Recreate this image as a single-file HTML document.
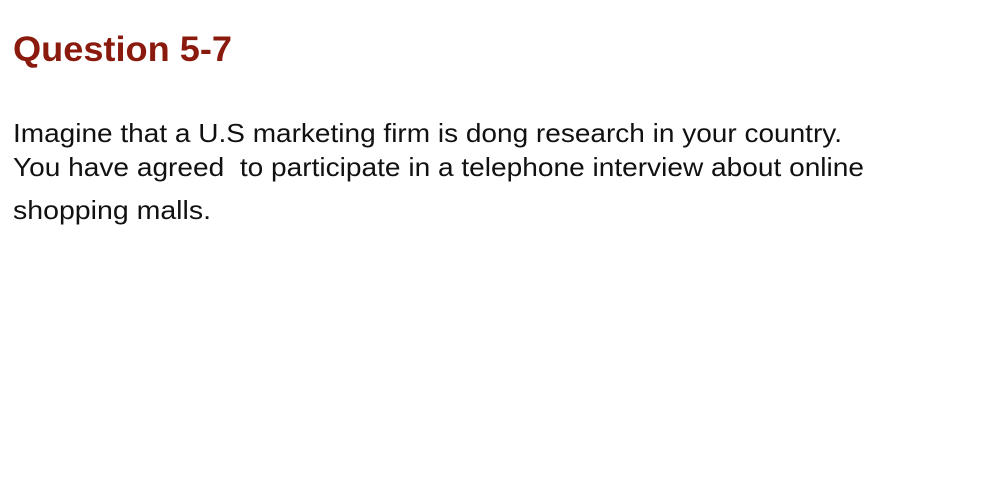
<!DOCTYPE html>
<html><head><style>
html,body{margin:0;padding:0;background:#fff;width:1002px;height:498px;overflow:hidden}
</style></head><body>
<svg width="1002" height="498" xmlns="http://www.w3.org/2000/svg" style="position:absolute;left:0;top:0">
<text x="13" y="61" font-family="Liberation Sans, sans-serif" font-weight="bold" font-size="35" fill="#8b1a0e" textLength="219" lengthAdjust="spacingAndGlyphs">Question 5-7</text>
<g font-family="Liberation Sans, sans-serif" font-size="26" fill="#111">
<text x="13" y="142" textLength="829" lengthAdjust="spacingAndGlyphs">Imagine that a U.S marketing firm is dong research in your country.</text>
<text x="13" y="176" textLength="851" lengthAdjust="spacingAndGlyphs" style="white-space:pre">You have agreed  to participate in a telephone interview about online</text>
<text x="13" y="219" textLength="198" lengthAdjust="spacingAndGlyphs">shopping malls.</text>
</g>
</svg>
</body></html>
